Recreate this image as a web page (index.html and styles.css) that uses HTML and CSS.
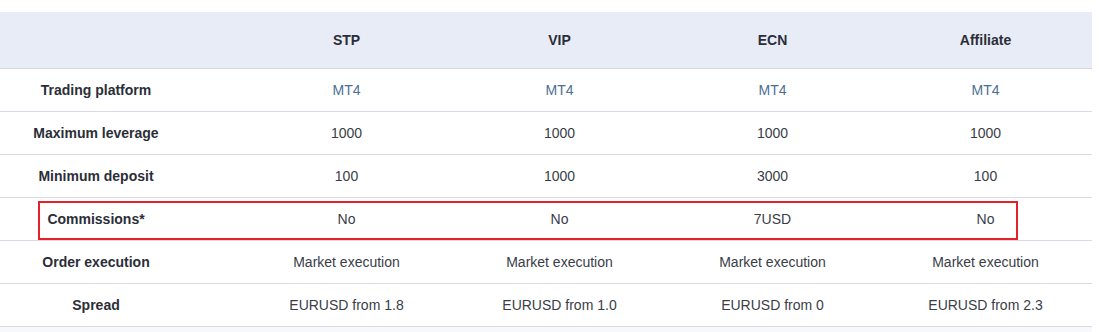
FILE: index.html
```html
<!DOCTYPE html>
<html>
<head>
<meta charset="utf-8">
<link rel="stylesheet" href="styles.css">
</head>
<body>
<div class="page">
  <div class="wrap">
    <table class="compare">
      <colgroup>
        <col class="c-label"><col class="c-val"><col class="c-val"><col class="c-val"><col class="c-val">
      </colgroup>
      <thead>
        <tr><th></th><th>STP</th><th>VIP</th><th>ECN</th><th>Affiliate</th></tr>
      </thead>
      <tbody>
        <tr><td class="label">Trading platform</td><td class="link">MT4</td><td class="link">MT4</td><td class="link">MT4</td><td class="link">MT4</td></tr>
        <tr><td class="label">Maximum leverage</td><td>1000</td><td>1000</td><td>1000</td><td>1000</td></tr>
        <tr><td class="label">Minimum deposit</td><td>100</td><td>1000</td><td>3000</td><td>100</td></tr>
        <tr class="marked"><td class="label">Commissions*</td><td>No</td><td>No</td><td>7USD</td><td>No</td></tr>
        <tr><td class="label">Order execution</td><td>Market execution</td><td>Market execution</td><td>Market execution</td><td>Market execution</td></tr>
        <tr><td class="label">Spread</td><td>EURUSD from 1.8</td><td>EURUSD from 1.0</td><td>EURUSD from 0</td><td>EURUSD from 2.3</td></tr>
      </tbody>
    </table>
    <div class="highlight"></div>
  </div>
  <div class="below"></div>
</div>
</body>
</html>
```

FILE: styles.css
```css
html, body {
  margin: 0;
  padding: 0;
  background: #ffffff;
}
.page {
  width: 1099px;
  height: 332px;
  overflow: hidden;
  padding-top: 12px;
  box-sizing: border-box;
  font-family: "Liberation Sans", Arial, sans-serif;
  font-size: 14px;
  color: #3a3d48;
}
.wrap {
  position: relative;
  width: 1092px;
}
.compare {
  width: 1092px;
  border-collapse: collapse;
  table-layout: fixed;
}
.c-label { width: 240px; }
.c-val { width: 213px; }
.compare thead th {
  background: #e8ecf6;
  height: 56px;
  padding: 0;
  font-weight: bold;
  font-size: 14px;
  color: #2b2e38;
  text-align: center;
  border-bottom: 1px solid #d3d7e2;
}
.compare td {
  height: 42px;
  padding: 0;
  text-align: center;
  border-bottom: 1px solid #d9dbe4;
}
.compare td.label {
  font-weight: bold;
  color: #2b2e38;
  padding-right: 48px;
}
.compare td.link {
  color: #4a6f93;
}
.highlight {
  position: absolute;
  left: 38px;
  top: 189px;
  width: 980px;
  height: 39px;
  border: 2px solid #e8202a;
  box-sizing: border-box;
  pointer-events: none;
}
.below {
  height: 20px;
  background: #f7f8fb;
  width: 1092px;
}
```
